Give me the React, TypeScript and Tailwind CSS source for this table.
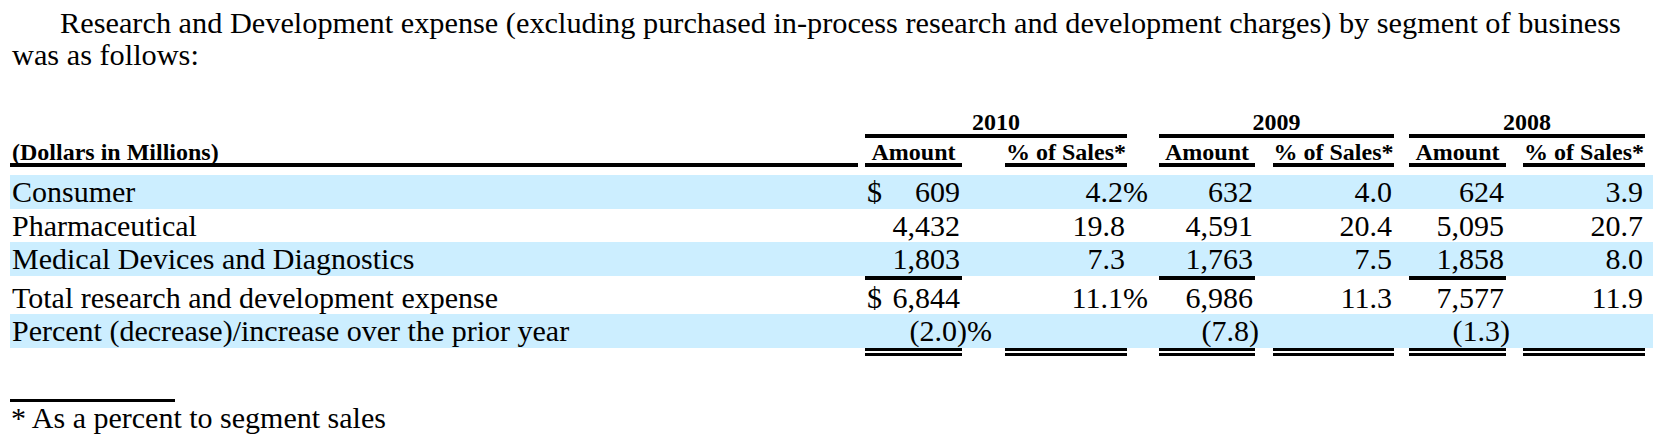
import React from 'react';

// column slots after the 848px label column: margin-left + width
const COLS = [
  'ml-[7px] w-[97px]',
  'ml-[43px] w-[122px]',
  'ml-[32px] w-[96px]',
  'ml-[18px] w-[121px]',
  'ml-[15px] w-[97px]',
  'ml-[17px] w-[122px]',
];

function Dollar({ v }: { v: string }) {
  return (
    <span className="flex w-full justify-between">
      <span>$</span>
      <span>{v}</span>
    </span>
  );
}

function Pct({ v }: { v: string }) {
  return <span className="mr-[-23px]">{v}%</span>;
}

function Row({
  label,
  cells,
  band,
  className = '',
}: {
  label: string;
  cells: React.ReactNode[];
  band?: boolean;
  className?: string;
}) {
  return (
    <div className={`flex w-[1643px] text-[30px] ${band ? 'bg-[#cceeff]' : ''} ${className}`}>
      <div className="w-[848px] shrink-0 pl-[2px] whitespace-nowrap">{label}</div>
      {cells.map((c, i) => (
        <div key={i} className={`${COLS[i]} shrink-0 flex justify-end pl-[2px] pr-[2px] whitespace-nowrap`}>
          {c}
        </div>
      ))}
    </div>
  );
}

function Rule({ cols, double }: { cols: number[]; double?: boolean }) {
  return (
    <div className="flex">
      <div className="w-[848px] shrink-0" />
      {COLS.map((c, i) => (
        <div
          key={i}
          className={`${c} shrink-0 ${
            cols.includes(i) ? (double ? 'h-[8px] border-y-[3px] border-black' : 'h-[4px] bg-black') : ''
          }`}
        />
      ))}
    </div>
  );
}

export default function App() {
  return (
    <div className="w-[1680px] h-[444px] overflow-hidden bg-white text-black font-['Liberation_Serif',serif]">
      <p className="pt-[7px] pl-[12px] text-[30.3px] leading-[32px] indent-[48px] whitespace-nowrap">
        Research and Development expense (excluding purchased in-process research and development charges) by segment of business
        <br />
        was as follows:
      </p>

      <div className="ml-[10px] mt-[40px]">
        {/* year groups */}
        <div className="flex text-[24px] font-bold leading-[22px]">
          <div className="w-[848px] shrink-0" />
          <div className="ml-[7px] w-[262px] shrink-0 text-center pb-[1px] border-b-4 border-black">2010</div>
          <div className="ml-[32px] w-[235px] shrink-0 text-center pb-[1px] border-b-4 border-black">2009</div>
          <div className="ml-[15px] w-[236px] shrink-0 text-center pb-[1px] border-b-4 border-black">2008</div>
        </div>

        {/* column headings */}
        <div className="mt-[3px] flex text-[24px] font-bold leading-[22px]">
          <div className="w-[848px] shrink-0 pl-[2px] border-b-4 border-black">(Dollars in Millions)</div>
          {['Amount', '% of Sales*', 'Amount', '% of Sales*', 'Amount', '% of Sales*'].map((h, i) => (
            <div key={i} className={`${COLS[i]} shrink-0 text-center whitespace-nowrap border-b-4 border-black`}>
              {h}
            </div>
          ))}
        </div>

        <div className="mt-[8px]">
          <Row
            band
            className="leading-[34px]"
            label="Consumer"
            cells={[<Dollar v="609" />, <Pct v="4.2" />, '632', '4.0', '624', '3.9']}
          />
          <Row
            className="leading-[33px]"
            label="Pharmaceutical"
            cells={['4,432', '19.8', '4,591', '20.4', '5,095', '20.7']}
          />
          <Row
            band
            className="leading-[34px]"
            label="Medical Devices and Diagnostics"
            cells={['1,803', '7.3', '1,763', '7.5', '1,858', '8.0']}
          />
          <Rule cols={[0, 2, 4]} />
          <Row
            className="pt-[2px] leading-[32px]"
            label="Total research and development expense"
            cells={[<Dollar v="6,844" />, <Pct v="11.1" />, '6,986', '11.3', '7,577', '11.9']}
          />
          <Row
            band
            className="leading-[34px]"
            label="Percent (decrease)/increase over the prior year"
            cells={[
              <span className="mr-[-32px]">(2.0)%</span>,
              '',
              <span className="mr-[-6px]">(7.8)</span>,
              '',
              <span className="mr-[-6px]">(1.3)</span>,
              '',
            ]}
          />
          <Rule cols={[0, 1, 2, 3, 4, 5]} double />
        </div>
      </div>

      <div className="ml-[10px] mt-[43px] w-[165px] h-[3px] bg-black" />
      <p className="pl-[11px] text-[30px] leading-[32px]">* As a percent to segment sales</p>
    </div>
  );
}
